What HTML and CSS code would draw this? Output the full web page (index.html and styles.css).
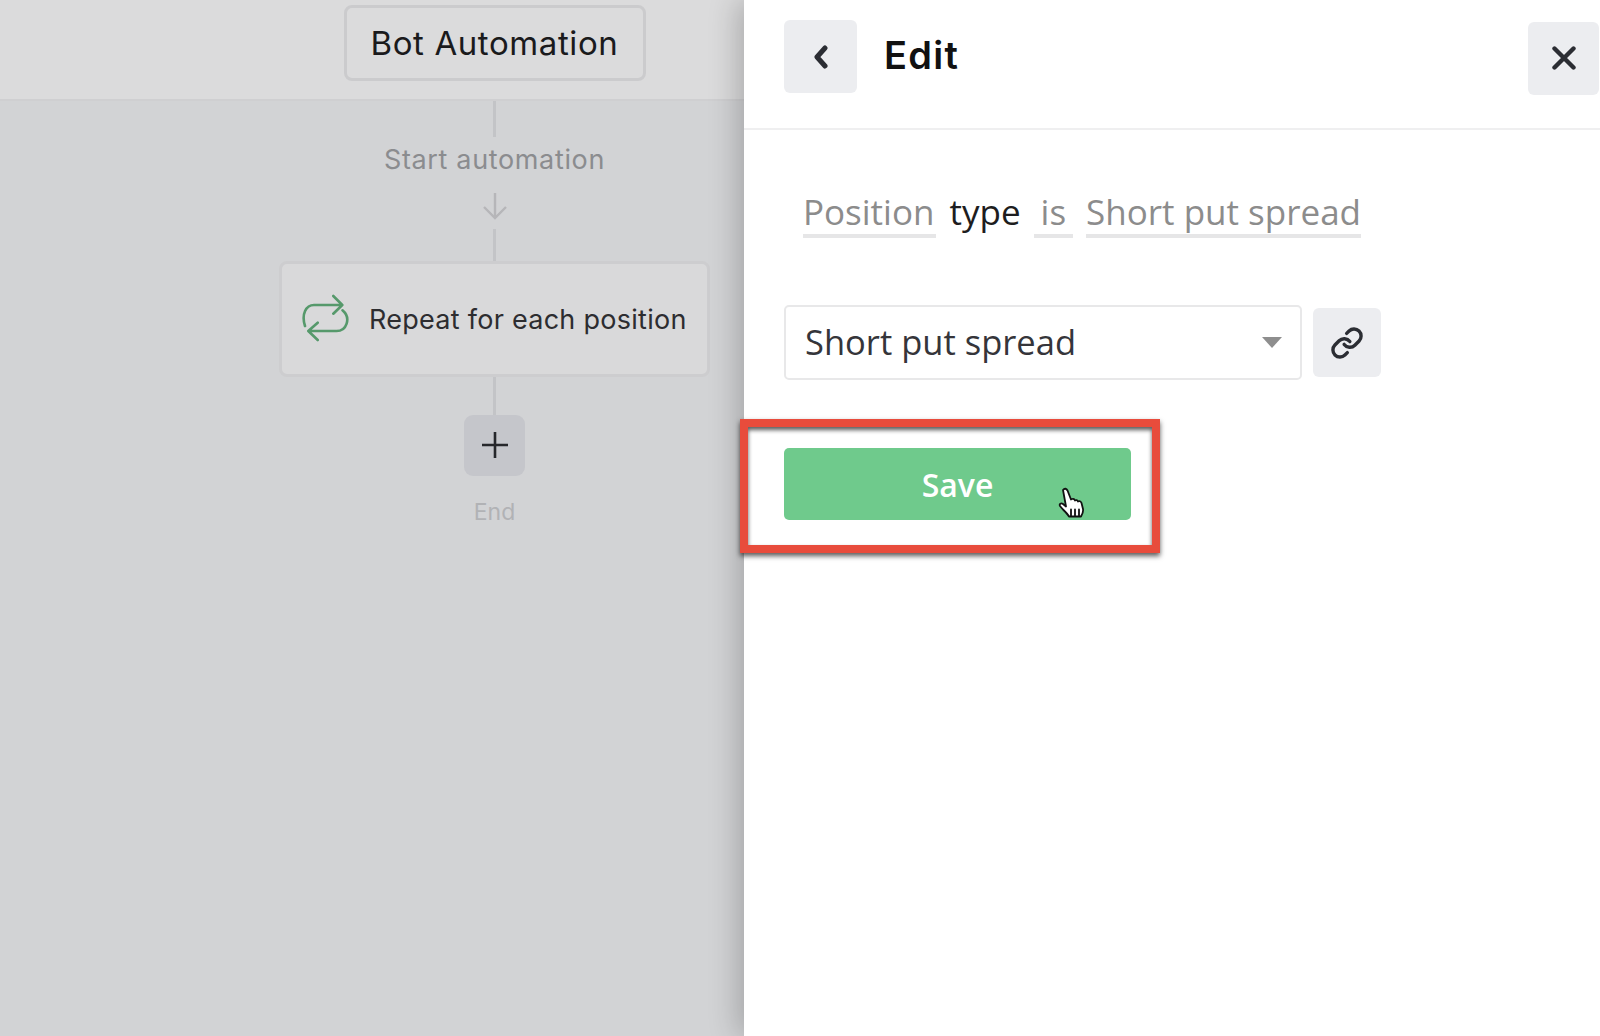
FILE: index.html
```html
<!DOCTYPE html>
<html lang="en">
<head>
<meta charset="utf-8">
<title>Edit</title>
<link rel="stylesheet" href="styles.css">
</head>
<body>
<div class="app">
  <section class="canvas">
    <header class="canvas-head">
      <div class="column head-column"><div class="bot-title">Bot Automation</div></div>
    </header>
    <div class="column flow">
      <span class="line line-a"></span>
      <div class="start-label">Start automation</div>
      <svg class="down-arrow" width="26" height="28" viewBox="0 0 26 28" fill="none" stroke="#b6b6b9" stroke-width="2.4"><path d="M13 1v25M2 15l11 11 11-11"/></svg>
      <span class="line line-b"></span>
      <div class="repeat-card">
        <svg class="repeat-icon" width="48" height="48" viewBox="0 0 48 48" fill="none" stroke="#56996b" stroke-width="2.6" stroke-linecap="round" stroke-linejoin="round"><path d="M32.3 2l9 9-9 8.7M41 11H13C5 11 .2 20 4 32"/><path d="M16.7 28.7L7.3 37l9.4 9M7.5 37h28c10 0 15-13 6-20.700"/></svg>
        <span class="repeat-text">Repeat for each position</span>
      </div>
      <span class="line line-c"></span>
      <button class="add-btn" type="button" aria-label="Add">
        <svg width="26" height="26" viewBox="0 0 26 26" fill="none" stroke="#26272b" stroke-width="2.6"><path d="M13 0v26M0 13h26"/></svg>
      </button>
      <div class="end-label">End</div>
    </div>
  </section>

  <aside class="panel">
    <header class="panel-head">
      <button class="icon-btn back-btn" type="button" aria-label="Back">
        <svg width="18" height="24" viewBox="0 0 18 24" fill="none" stroke="#2b2d33" stroke-width="5" stroke-linecap="round" stroke-linejoin="round"><path d="M13 3L5 12l8 9"/></svg>
      </button>
      <h1 class="panel-title">Edit</h1>
      <button class="icon-btn close-btn" type="button" aria-label="Close">
        <svg width="24" height="24" viewBox="0 0 24 24" fill="none" stroke="#2b2d33" stroke-width="4.400" stroke-linecap="round"><path d="M2.500 2.500l19 19M21.500 2.500l-19 19"/></svg>
      </button>
    </header>
    <div class="panel-body">
      <div class="rule">
        <span class="token token-first">Position</span>
        <span class="plain">type</span>
        <span class="token token-wide">is</span>
        <span class="token">Short put spread</span>
      </div>
      <div class="select-row">
        <div class="select">
          <span class="select-value">Short put spread</span>
          <span class="caret"></span>
        </div>
        <button class="link-btn" type="button" aria-label="Link">
          <svg width="34" height="34" viewBox="0 0 24 24" fill="none" stroke="#2b2d33" stroke-width="2.400" stroke-linecap="round" stroke-linejoin="round"><path d="M10 13a5 5 0 0 0 7.540.54l3-3a5 5 0 0 0-7.070-7.070l-1.720 1.710"/><path d="M14 11a5 5 0 0 0-7.540-.54l-3 3a5 5 0 0 0 7.070 7.070l1.710-1.710"/></svg>
        </button>
      </div>
      <div class="save-wrap">
        <button class="save-btn" type="button">Save</button>
        <span class="highlight"></span>
        <svg class="hand" width="28" height="33" viewBox="0 0 28 33" stroke="#111" stroke-width="1.800" stroke-linejoin="round" stroke-linecap="round" fill="#fff"><path d="M5 3c1.500-2 3.500-1.500 4.500.5l3.500 9 1-.5c1.500-.5 2.500 0 3 1.500 1-.8 2.500-.5 3 1 1.200-.8 3-.4 3.500 1.500l1.500 6c.5 3-.5 5-2 7.500H11c-1-2-3-4-6-7L2 19c-1-2 1-3.500 3-2l3 2.500z"/><path d="M13 22.500v6M17 22.500v6M21 22.500v6" fill="none"/></svg>
      </div>
    </div>
  </aside>
</div>
</body>
</html>
```

FILE: styles.css
```css
* { box-sizing: border-box; }
html, body { margin: 0; height: 100%; }
body { font-family: Inter, "Noto Sans", sans-serif; background: #fff; overflow: hidden; }
button { border: 0; padding: 0; font: inherit; }

.app { display: flex; height: 1036px; }

/* Left canvas */
.canvas { width: 744px; flex: none; background: #d2d3d5; }
.canvas-head { height: 101px; background: #dbdbdc; border-bottom: 2px solid #cfcfd1; }
.column { width: 431px; margin-left: 279px; }
.head-column { display: flex; justify-content: center; padding-top: 5px; }
.bot-title {
  width: 302px; height: 76px;
  display: flex; align-items: center; justify-content: center;
  border: 3px solid #cbcbcd; border-radius: 8px;
  font-size: 33px; color: #1a1a1c; letter-spacing: .6px;
}
.flow { display: flex; flex-direction: column; align-items: center; }
.line { display: block; width: 3px; background: #c3c4c7; }
.line-a { height: 36px; }
.line-b { height: 32px; }
.line-c { height: 38px; }
.start-label { margin-top: 3px; height: 40px; line-height: 40px; font-size: 27px; letter-spacing: .65px; color: #8b8c8f; }
.down-arrow { margin-top: 12px; margin-bottom: 9px; }
.repeat-card {
  width: 431px; height: 116px;
  display: flex; align-items: center; gap: 20px; padding-left: 19px;
  background: #d9d9da; border: 3px solid #cdcdcf; border-radius: 8px;
}
.repeat-icon { flex: none; margin-top: -2px; }
.repeat-text { font-size: 27px; color: #2d2d30; white-space: nowrap; letter-spacing: .27px; }
.add-btn {
  width: 61px; height: 61px;
  display: flex; align-items: center; justify-content: center;
  background: #c5c6cb; border-radius: 9px;
}
.add-btn svg { margin-top: -2px; }
.end-label { margin-top: 21px; font-size: 23px; line-height: 30px; color: #b1b2b5; }

/* Right panel */
.panel { flex: 1; position: relative; background: #fff; box-shadow: -6px 0 28px rgba(0,0,0,.22); }
.panel-head {
  height: 130px; display: flex; align-items: flex-start;
  padding: 20px 1px 0 40px; border-bottom: 2px solid #efeff0;
}
.icon-btn { display: flex; align-items: center; justify-content: center; background: #ecedf0; border-radius: 6px; }
.back-btn { width: 73px; height: 73px; }
.panel-title { margin: 0 0 0 27px; font-size: 38px; line-height: 70px; font-weight: 600; letter-spacing: 1.3px; color: #111; font-family: Inter, sans-serif; flex: 1; }
.close-btn { width: 71px; height: 73px; margin-top: 2px; }
.close-btn svg { margin-top: -2px; }

.panel-body { padding: 60px 0 0 40px; }
.rule { display: flex; gap: 13px; margin-left: 19px; font-size: 35px; line-height: 44px; font-family: "Open Sans", sans-serif; }
.token { color: #8c8c8c; border-bottom: 4px solid #e6e6e7; white-space: nowrap; }
.token-first { padding-right: 2px; }
.token-wide { padding: 0 7px; }
.plain { color: #1d1d20; }
.select-row { display: flex; align-items: center; gap: 11px; margin-top: 67px; }
.select {
  width: 518px; height: 75px;
  display: flex; align-items: center; justify-content: space-between;
  padding: 0 18px 0 19px;
  border: 2px solid #e8e8e9; border-radius: 5px;
  font-family: "Open Sans", sans-serif; font-size: 34.5px; color: #35353a;
}
.select-value { margin-top: -3px; }
.caret { width: 0; height: 0; border-left: 10px solid transparent; border-right: 10px solid transparent; border-top: 11px solid #8e8e8e; }
.link-btn { width: 68px; height: 69px; display: flex; align-items: center; justify-content: center; background: #ecedf0; border-radius: 6px; }

.save-wrap { position: relative; width: 347px; margin-top: 68px; }
.save-btn {
  display: block; width: 347px; height: 72px;
  background: #6fca8c; color: #fff; border-radius: 5px;
  font-family: "Open Sans", sans-serif; font-size: 32px; font-weight: 600;
}
.highlight {
  position: absolute; left: -44px; top: -29px; width: 420px; height: 134px;
  border: 8px solid #e84c3c;
  box-shadow: 0 3px 5px rgba(0,0,0,.65), inset 0 3px 4px rgba(0,0,0,.65);
}
.hand { position: absolute; left: 274px; top: 39px; }
```
